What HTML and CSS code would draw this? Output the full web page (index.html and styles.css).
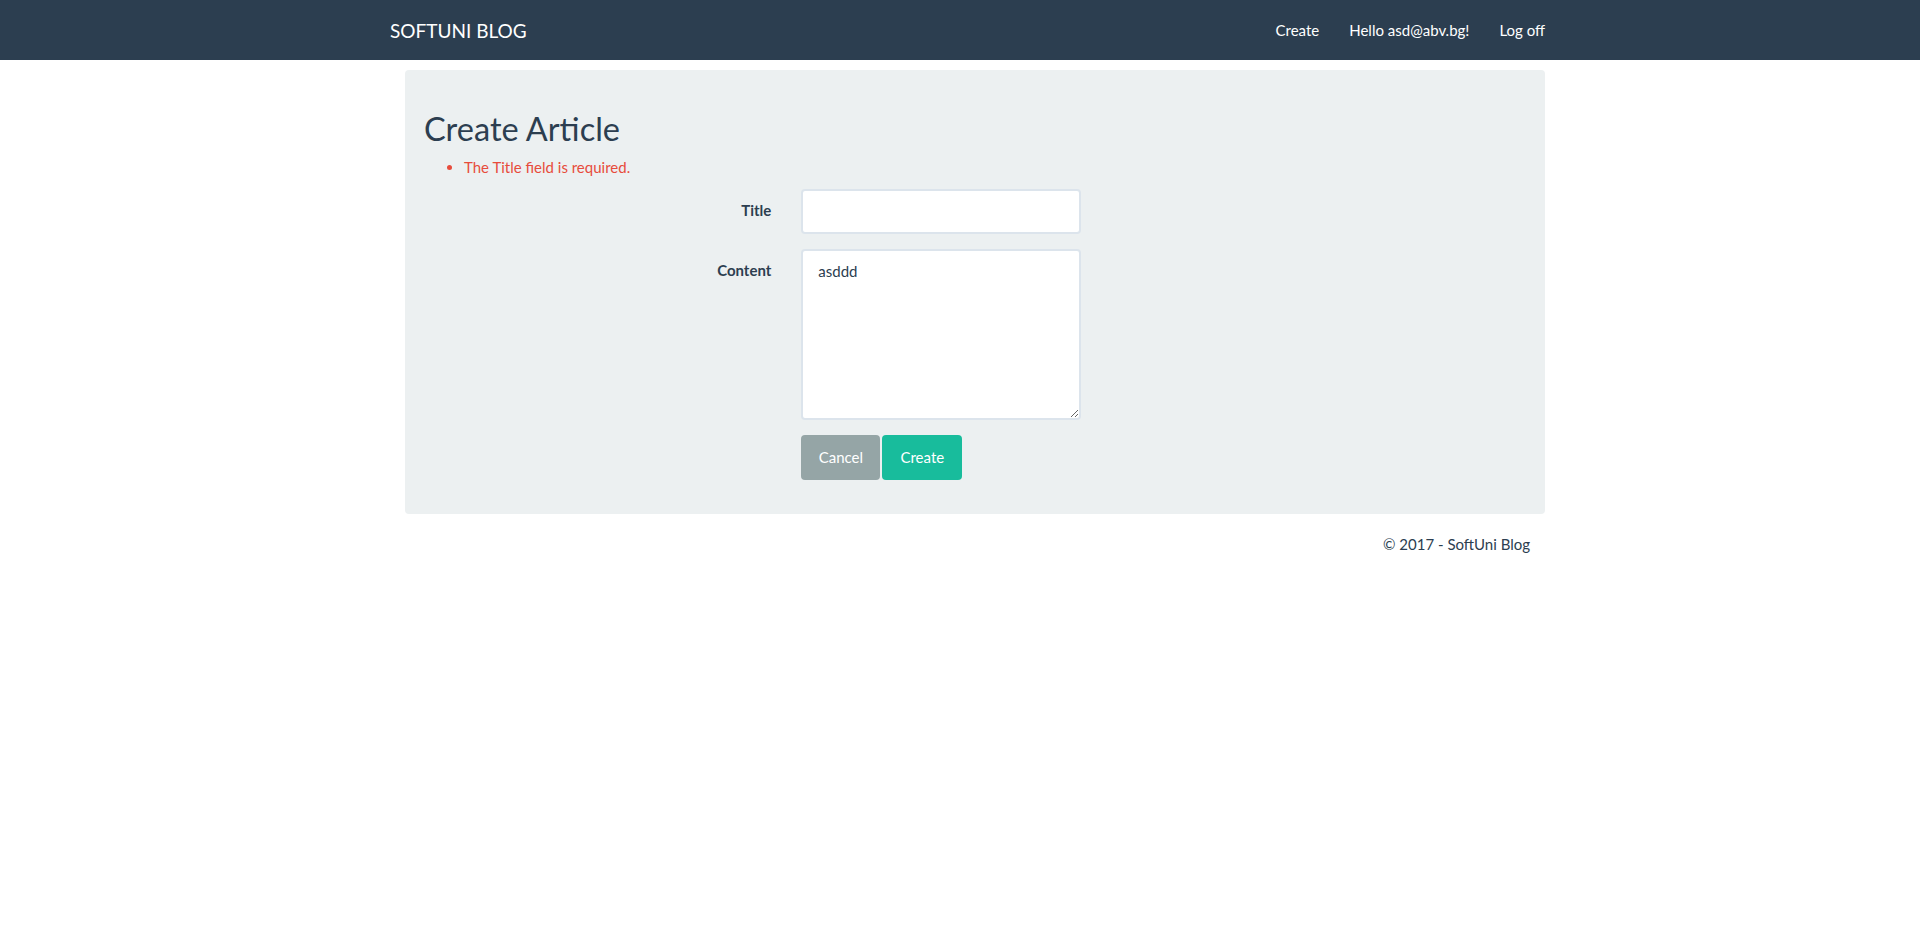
FILE: index.html
```html
<!DOCTYPE html>
<html lang="en">
<head>
<meta charset="utf-8">
<title>Create Article - SoftUni Blog</title>
<link rel="stylesheet" href="styles.css">
</head>
<body>
<nav class="navbar">
  <div class="container nav-inner">
    <a class="brand" href="#">SOFTUNI BLOG</a>
    <ul class="nav-right">
      <li><a href="#">Create</a></li>
      <li><a href="#">Hello asd@abv.bg!</a></li>
      <li><a href="#">Log off</a></li>
    </ul>
  </div>
</nav>
<main class="container">
  <div class="well">
    <h2 class="heading">Create Article</h2>
    <ul class="errors">
      <li>The Title field is required.</li>
    </ul>
    <form class="form">
      <div class="form-group">
        <label class="control-label" for="title">Title</label>
        <div class="control-col">
          <input class="form-control" id="title" type="text" value="">
        </div>
      </div>
      <div class="form-group">
        <label class="control-label" for="content">Content</label>
        <div class="control-col">
          <textarea class="form-control textarea" id="content">asddd</textarea>
        </div>
      </div>
      <div class="form-group">
        <div class="spacer-col"></div>
        <div class="control-col buttons">
          <a class="btn btn-default" href="#">Cancel</a>
          <button class="btn btn-success" type="button">Create</button>
        </div>
      </div>
    </form>
  </div>
  <footer class="footer">
    <p>© 2017 - SoftUni Blog</p>
  </footer>
</main>
</body>
</html>
```
FILE: styles.css
```css
* { box-sizing: border-box; }
html, body { margin: 0; padding: 0; }
body {
  font-family: Lato, "Open Sans", "Liberation Sans", sans-serif;
  font-size: 15px;
  line-height: 1.42857;
  color: #2c3e50;
  background: #ffffff;
}
a { text-decoration: none; }
.container {
  box-sizing: content-box;
  width: 1170px;
  margin: 0 auto;
  padding: 0 15px;
}
.navbar {
  background: #2c3e50;
  height: 60px;
}
.nav-inner {
  display: flex;
  justify-content: space-between;
  align-items: flex-start;
  height: 60px;
}
.brand {
  color: #ffffff;
  font-size: 19px;
  line-height: 21px;
  padding: 19.5px 15px;
  margin-left: 0;
  height: 60px;
}
.nav-right {
  list-style: none;
  margin: 0 -15px 0 0;
  padding: 0;
  display: flex;
}
.nav-right a {
  display: block;
  color: #ffffff;
  line-height: 21px;
  padding: 19.5px 15px;
}
.well {
  margin: 10px 0 20px 30px;
  background: #ecf0f1;
  border-radius: 4px;
  padding: 19px;
}
.heading {
  font-size: 32.5px;
  font-weight: 400;
  line-height: 1.1;
  margin: 22px 0 10.5px;
}
.errors {
  color: #e74c3c;
  margin: 0 0 10.5px;
  padding-left: 40px;
}
.form { margin: 0; }
.form-group {
  display: flex;
  margin: 0 -15px 15px;
}
.control-label, .spacer-col {
  width: 33.3333%;
  padding: 11px 15px 0;
  text-align: right;
  font-weight: 700;
  margin: 0;
}
.control-col {
  width: 33.3333%;
  padding: 0 15px;
}
.form-control {
  display: block;
  width: 100%;
  max-width: 280px;
  height: 45px;
  padding: 10px 15px;
  font-family: inherit;
  font-size: 15px;
  line-height: 1.42857;
  color: #2c3e50;
  background: #ffffff;
  border: 2px solid #dce4ec;
  border-radius: 4px;
  margin: 0;
}
.textarea {
  height: 171px;
  resize: vertical;
}
.buttons {
  display: flex;
  gap: 2px;
}
.btn {
  display: inline-flex;
  align-items: center;
  justify-content: center;
  font-family: inherit;
  font-size: 15px;
  line-height: 21px;
  padding: 0 17px;
  height: 45px;
  border: none;
  border-radius: 4px;
  color: #ffffff;
  cursor: pointer;
}
.btn-default { background: #95a5a6; width: 79px; }
.btn-success { background: #18bc9c; width: 80px; }
.footer {
  text-align: right;
  padding-right: 15px;
}
.footer p { margin: 0 0 10.5px; }
```
